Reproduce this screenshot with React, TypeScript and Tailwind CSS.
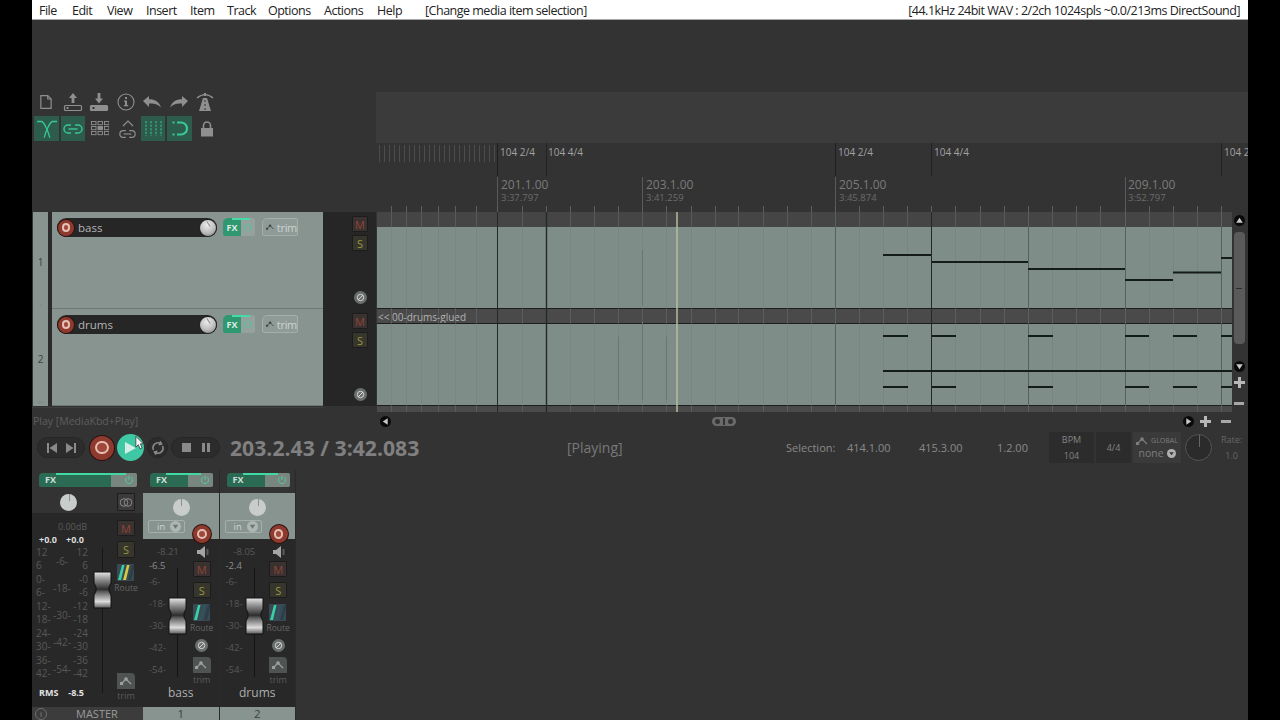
import React from "react";

const menuItems = [
  { label: "File", cls: "w-[33px]" },
  { label: "Edit", cls: "w-[35px]" },
  { label: "View", cls: "w-[39px]" },
  { label: "Insert", cls: "w-[44px]" },
  { label: "Item", cls: "w-[37px]" },
  { label: "Track", cls: "w-[41px]" },
  { label: "Options", cls: "w-[56px]" },
  { label: "Actions", cls: "w-[53px]" },
  { label: "Help", cls: "w-[48px]" },
];

const ICON = "#8f8f8f";
const GREEN = "#38c795";

// arrange canvas coordinates are page x/y minus (377, 212)
const softLines = [391, 406, 421, 438, 455, 476, 522, 570, 594, 618, 642, 666, 691, 715, 738, 763, 787, 811, 859, 883, 907, 955, 980, 1004, 1052, 1076, 1100, 1149, 1173, 1197];
const hardLines = [497, 546, 835, 931, 1028, 1125, 1221];
const bassNotes = [
  [883, 931, 255],
  [932, 1028, 262],
  [1028, 1125, 269],
  [1125, 1173, 280],
  [1173, 1221, 272.5],
  [1221, 1232, 258],
];
const hitStarts = [
  [883, 908],
  [932, 956],
  [1028, 1053],
  [1125, 1149],
  [1173, 1197],
  [1221, 1232],
];

const tempoLabels = [
  { text: "104 2/4", cls: "left-[124px]" },
  { text: "104 4/4", cls: "left-[172px]" },
  { text: "104 2/4", cls: "left-[462px]" },
  { text: "104 4/4", cls: "left-[558px]" },
  { text: "104 2", cls: "left-[848px]" },
];
const rulerLabels = [
  { bar: "201.1.00", time: "3:37.797", cls: "left-[125px]" },
  { bar: "203.1.00", time: "3:41.259", cls: "left-[270px]" },
  { bar: "205.1.00", time: "3:45.874", cls: "left-[463px]" },
  { bar: "209.1.00", time: "3:52.797", cls: "left-[752px]" },
];

function DocIcon() {
  return (
    <svg width="12" height="16" viewBox="0 0 14 17" fill="none" stroke={ICON} strokeWidth="1.4">
      <path d="M1 1h8l4 4v11H1z" />
      <path d="M9 1v4h4" />
    </svg>
  );
}
function DriveIcon({ up, solid }: { up?: boolean; solid?: boolean }) {
  return (
    <svg width="20" height="20" viewBox="0 0 20 20" fill="none">
      <rect x="1.5" y="13.5" width="17" height="5" rx="1" stroke={ICON} strokeWidth="1.2" fill={solid ? ICON : "none"} />
      <rect x="3.5" y="15" width="2" height="2" fill={solid ? "#333" : ICON} />
      {up ? <path d="M10 1l4 5h-2.6v5H8.6V6H6z" fill={ICON} /> : <path d="M10 11.5l4-5h-2.6V1H8.6v5.5H6z" fill={ICON} />}
    </svg>
  );
}
function InfoIcon() {
  return (
    <svg width="18" height="18" viewBox="0 0 18 18" fill="none">
      <circle cx="9" cy="9" r="8" stroke={ICON} strokeWidth="1.1" />
      <rect x="8" y="4" width="2" height="2" fill={ICON} />
      <path d="M7 7.5h3V12h1.2v1.2H6.8V12H8V8.7H7z" fill={ICON} />
    </svg>
  );
}
function UndoIcon({ flip }: { flip?: boolean }) {
  return (
    <svg width="20" height="14" viewBox="0 0 20 14" className={flip ? "-scale-x-100" : ""}>
      <path d="M1 6l6-5v3.2c6 0 10 2.400 12 8.300-3-3.500-7-4.500-12-4V12z" fill={ICON} />
    </svg>
  );
}
function RoadIcon() {
  return (
    <svg width="20" height="20" viewBox="0 0 20 20" fill="none">
      <path d="M2 6c5-4.500 11-4.500 16 0" stroke={ICON} strokeWidth="1.4" />
      <path d="M8 6h4l4 13H4z" fill={ICON} />
      <path d="M10 8v2M10 12v2M10 16v2" stroke="#333" strokeWidth="1" />
      <rect x="9" y="1" width="2" height="3" fill={ICON} />
    </svg>
  );
}
function CrossIcon() {
  return (
    <svg width="20" height="18" viewBox="0 0 20 18" fill="none" stroke={GREEN} strokeWidth="1.3">
      <path d="M0 1.500h4c3 0 4 4 6 8 2 4 2 7 3 8" />
      <path d="M20 1.500h-4c-3 0-4 4-6 8-2 4-2 7-3 8" />
    </svg>
  );
}
function LinkIcon({ color = GREEN, width = 20 }: { color?: string; width?: number }) {
  return (
    <svg width={width} height="10" viewBox="0 0 20 10" fill="none" stroke={color} strokeWidth="1.4">
      <path d="M8 1H5a4 4 0 0 0 0 8h3" />
      <path d="M12 1h3a4 4 0 0 1 0 8h-3" />
      <path d="M5.500 5h9" />
    </svg>
  );
}
function GridIcon() {
  const cells = [0, 1, 2, 3, 4, 5, 6, 7, 8];
  return (
    <svg width="18" height="15" viewBox="0 0 18 15" fill="none">
      {cells.map((i) => (
        <rect
          key={i}
          x={0.5 + (i % 3) * 6.5}
          y={0.5 + Math.floor(i / 3) * 5}
          width="4.500"
          height="3.200"
          stroke={ICON}
          strokeWidth="0.9"
          fill={i === 4 ? ICON : "none"}
        />
      ))}
    </svg>
  );
}
function EnvLinkIcon() {
  return (
    <div className="flex flex-col items-center gap-[2px]">
      <svg width="12" height="8" viewBox="0 0 12 8" fill="none" stroke={ICON} strokeWidth="1.2">
        <path d="M1 7l5-5 5 5" />
      </svg>
      <LinkIcon color={ICON} width={17} />
    </div>
  );
}
function BarsIcon() {
  const xs = [1, 6, 11, 16];
  return (
    <svg width="17" height="15" viewBox="0 0 17 15" fill="none" stroke={GREEN} strokeWidth="1" strokeDasharray="2.200 1.400">
      {xs.map((x) => (
        <path key={x} d={`M${x} 0v15`} />
      ))}
    </svg>
  );
}
function MagnetIcon() {
  return (
    <svg width="16" height="15" viewBox="0 0 16 15" fill="none" stroke={GREEN} strokeWidth="2.200">
      <path d="M5 1.500h4a6 6 0 0 1 0 12H5" />
      <path d="M0.500 1.500h2M0.500 13.500h2" />
    </svg>
  );
}
function LockIcon() {
  return (
    <svg width="14" height="16" viewBox="0 0 14 16" fill="none">
      <path d="M3.500 7V4.500a3.500 3.500 0 0 1 7 0V7" stroke={ICON} strokeWidth="1.600" />
      <rect x="1" y="7" width="12" height="8.500" fill={ICON} />
    </svg>
  );
}
function PowerIcon({ color = GREEN }: { color?: string }) {
  return (
    <svg width="10" height="10" viewBox="0 0 10 10" fill="none" stroke={color} strokeWidth="1">
      <path d="M3 2.200a3.500 3.500 0 1 0 4 0" />
      <path d="M5 0.800v4" />
    </svg>
  );
}
function EnvIcon({ color = "#d0d6d4" }: { color?: string }) {
  return (
    <svg width="13" height="8" viewBox="0 0 13 8" fill="none" stroke={color} strokeWidth="1.200">
      <path d="M1.500 6.500L6 2l5 5" />
      <circle cx="1.500" cy="6.500" r="1.200" fill={color} />
      <circle cx="6" cy="2" r="1.200" fill={color} />
    </svg>
  );
}

function Knob({ cls }: { cls: string }) {
  return (
    <div className={`rounded-full border border-black/80 bg-[radial-gradient(circle_at_45%_30%,#ececec,#bdbdbd_55%,#777777)] ${cls}`}>
      <div className="absolute left-1/2 top-[1px] h-[6px] w-px -rotate-[35deg] bg-[#888]" />
    </div>
  );
}
function FlatKnob({ cls = "relative" }: { cls?: string }) {
  return (
    <div className={`h-[17px] w-[17px] rounded-full bg-[#c8cdcb] ${cls}`}>
      <div className="absolute left-1/2 top-0 h-[7px] w-px bg-[#8b8f8e]" />
    </div>
  );
}
function RecBtn({ cls }: { cls: string }) {
  return (
    <div className={`flex items-center justify-center rounded-full border border-black/70 bg-[#8f3a2f] ${cls}`}>
      <div className="h-[55%] w-[55%] rounded-full border-[2.5px] border-[#e5c0b5] bg-[#a1483c]" />
    </div>
  );
}
function PhaseBtn() {
  return (
    <div className="flex h-[13px] w-[13px] items-center justify-center rounded-full bg-[#6a6f6d]">
      <svg width="9" height="9" viewBox="0 0 9 9" fill="none" stroke="#d5d8d6" strokeWidth="1">
        <circle cx="4.500" cy="4.500" r="3.200" />
        <path d="M2 7l5-5" />
      </svg>
    </div>
  );
}
function MuteSolo({ letter, cls = "h-[16px] w-[16px]" }: { letter: "M" | "S"; cls?: string }) {
  const tone = letter === "M" ? "bg-[#3a3230] text-[#8f4438]" : "bg-[#36362c] text-[#99953f]";
  return (
    <div className={`flex items-center justify-center rounded-[1px] border border-[#1c1c1c] text-[11px] leading-none ${tone} ${cls}`}>
      {letter}
    </div>
  );
}
function ScrollDot({ dir }: { dir: "up" | "down" | "left" | "right" }) {
  const pts = { up: "5,2.500 8,7 2,7", down: "5,7.500 8,3 2,3", left: "2.500,5 7,2 7,8", right: "7.500,5 3,2 3,8" }[dir];
  return (
    <svg width="11" height="11" viewBox="0 0 10 10" className="shrink-0">
      <circle cx="5" cy="5" r="5" fill="#0a0a0a" />
      <polygon points={pts} fill="#c8c8c8" />
    </svg>
  );
}
function Plus() {
  return (
    <svg width="11" height="11" viewBox="0 0 11 11" className="shrink-0">
      <path d="M4 0h3v4h4v3H7v4H4V7H0V4h4z" fill="#b8b8b8" />
    </svg>
  );
}
function Minus() {
  return <div className="h-[3px] w-[10px] shrink-0 bg-[#a8a8a8]" />;
}

function TrackFx() {
  return (
    <div className="relative flex h-[18px] w-[32px] overflow-hidden rounded-[2px] rounded-tl-[5px] bg-[#94a19d]">
      <div className="flex w-[18px] items-center justify-center bg-[#2f9871] text-[9px] font-bold leading-none text-[#dfece7]">FX</div>
      <div className="flex flex-1 items-center justify-center">
        <PowerIcon color="#55c99d" />
      </div>
      <div className="absolute left-[9px] top-0 h-[2px] w-[18px] bg-[#46dba6]" />
    </div>
  );
}
function TrackTrim() {
  return (
    <div className="flex h-[18px] w-[36px] items-center gap-[2px] rounded-[2px] rounded-tl-[5px] border border-[#a5aeab] bg-[#8f9b97] pl-[3px]">
      <EnvIcon color="#3a3f3e" />
      <span className="text-[11px] leading-none tracking-[-0.3px] text-[#cdd3d1]">trim</span>
    </div>
  );
}
function TrackRow({ num, name, folder }: { num: number; name: string; folder?: boolean }) {
  return (
    <div className="flex h-[97px] w-full pl-px">
      <div className="flex w-[15px] flex-col items-center justify-between bg-[#87948f] pb-[1px] pt-[45px] text-[10px] leading-none text-[#3a4240]">
        {num}
        <span className="text-[6px] text-[#77827e]">{folder ? "▭" : "▫"}</span>
      </div>
      <div className="w-[4px] bg-[#2b2b2b]" />
      <div className="flex w-[271px] gap-[5px] border-b border-[#6c7774] bg-[#87948f] pl-[5px] pt-[6px]">
        <div className="relative flex h-[19px] w-[160px] items-center rounded-full bg-[#262626] pl-[21px] text-[11.500px] leading-none text-[#b4b4b4]">
          {name}
          <RecBtn cls="absolute left-0 top-[0.5px] h-[18px] w-[18px]" />
          <Knob cls="absolute right-0 top-[0.5px] h-[18px] w-[18px]" />
        </div>
        <div className="ml-[1px]">
          <TrackFx />
        </div>
        <div className="ml-[2px]">
          <TrackTrim />
        </div>
      </div>
      <div className="flex flex-1 flex-col bg-[#262626] pl-[29px] pr-[7px] pt-[4px]">
        <div className="flex flex-col gap-[3px]">
          <MuteSolo letter="M" />
          <MuteSolo letter="S" />
        </div>
        <div className="ml-[1.5px] mt-[40px]">
          <PhaseBtn />
        </div>
      </div>
    </div>
  );
}

function ArrangeLines() {
  return (
    <svg className="pointer-events-none absolute inset-0" width="855" height="200" viewBox="377 212 855 200" fill="none">
      {softLines.map((x) => (
        <path key={x} d={`M${x + 0.5} 212V412`} stroke="#6f7c79" strokeOpacity="0.4" />
      ))}
      {hardLines.map((x, i) => (
        <path key={x} d={`M${x + 0.5} 212V412`} stroke={i < 2 || i === 3 ? "#23292a" : "#566260"} strokeWidth={x === 546 ? 1.4 : 1} />
      ))}
      <path d="M618.500 337v63M642.500 322v78M666.500 337v63M642.500 250v55" stroke="#687572" />
      {bassNotes.map(([a, b, y]) => (
        <path key={a} d={`M${a} ${y}H${b}`} stroke="#141c1b" strokeWidth="2" />
      ))}
      {hitStarts.map(([a, b]) => (
        <path key={a} d={`M${a} 336H${b}M${a} 387H${b}`} stroke="#141c1b" strokeWidth="2" />
      ))}
      <path d="M883 371H1232" stroke="#141c1b" strokeWidth="2" />
      <path d="M677 212V412" stroke="#b7bd9f" strokeWidth="1.500" />
    </svg>
  );
}

function Timeline() {
  const tempoTicks = Array.from({ length: 24 }, (_, i) => 379 + i * 5);
  const rulerTicks = [...softLines, ...hardLines];
  return (
    <div className="flex w-[872px] flex-col">
      <div className="h-[72px]" />
      <div className="h-[51px] bg-[#3b3b3b]" />
      <div className="relative h-[69px] overflow-hidden text-[#a2a2a2]">
        <svg className="absolute inset-0" width="872" height="69" viewBox="376 143 872 69" fill="none">
          {tempoTicks.map((x) => (
            <path key={x} d={`M${x + 0.5} 145v17`} stroke="#4c4c4c" />
          ))}
          {[497, 546, 835, 931, 1221].map((x) => (
            <path key={x} d={`M${x + 0.5} 143v33`} stroke={x === 497 || x === 835 ? "#1f1f1f" : "#222"} />
          ))}
          {[497, 642, 835, 1125].map((x) => (
            <path key={x} d={`M${x + 0.5} 177v35`} stroke="#5a5a5a" />
          ))}
          {rulerTicks.map((x) => (
            <path key={x} d={`M${x + 0.5} 206v6`} stroke="#5f5f5f" />
          ))}
        </svg>
        {tempoLabels.map((l) => (
          <span key={l.cls} className={`absolute top-[3px] whitespace-nowrap text-[10px] leading-[13px] ${l.cls}`}>
            {l.text}
          </span>
        ))}
        {rulerLabels.map((l) => (
          <div key={l.cls} className={`absolute top-[35px] text-[#7b7b7b] ${l.cls}`}>
            <div className="text-[12px] leading-[14px]">{l.bar}</div>
            <div className="text-[9.500px] leading-[12px] text-[#6c6c6c]">{l.time}</div>
          </div>
        ))}
      </div>
      <div className="flex h-[200px]">
        <div className="relative ml-px flex w-[855px] flex-col bg-[#454545]">
          <div className="h-[15px] bg-[#454545]" />
          <div className="h-[81px] bg-[#7f8d89]" />
          <div className="h-px bg-[#1d1d1d]" />
          <div className="h-[14px] bg-[#4a4a4a] pl-[1px] pt-[1px] text-[10px] leading-[14px] text-[#b3b3b3]">&lt;&lt; 00-drums-glued</div>
          <div className="h-px bg-[#1d1d1d]" />
          <div className="h-[81px] bg-[#7f8d89]" />
          <div className="h-px bg-[#1d1d1d]" />
          <div className="flex-1 bg-[#4a4a4a]" />
          <ArrangeLines />
        </div>
        <div className="flex w-[16px] flex-col items-center pr-[2px]">
          <div className="mt-[3px]">
            <ScrollDot dir="up" />
          </div>
          <div className="mt-[6px] flex h-[112px] w-[11px] items-center justify-center rounded-[4px] bg-[#5a5a5a]">
            <div className="h-px w-[6px] bg-[#2c2c2c]" />
          </div>
          <div className="mt-[17px]">
            <ScrollDot dir="down" />
          </div>
          <div className="mt-[5px]">
            <Plus />
          </div>
          <div className="mt-[14px]">
            <Minus />
          </div>
        </div>
      </div>
    </div>
  );
}

function Fader() {
  return (
    <svg width="19" height="38" viewBox="0 0 19 38">
      <defs>
        <linearGradient id="fdr" x1="0" y1="0" x2="0" y2="1">
          <stop offset="0" stopColor="#e8e8e8" />
          <stop offset="0.22" stopColor="#8c8c8c" />
          <stop offset="0.48" stopColor="#2e2e2e" />
          <stop offset="0.55" stopColor="#5d5d5d" />
          <stop offset="0.82" stopColor="#dcdcdc" />
          <stop offset="1" stopColor="#5a5a5a" />
        </linearGradient>
      </defs>
      <path d="M1 1h17v11l-2 4v4l2 4v13H1V24l2-4v-4L1 12z" fill="url(#fdr)" stroke="#101010" />
    </svg>
  );
}
function RouteIcon({ master }: { master?: boolean }) {
  return (
    <svg width="17" height="17" viewBox="0 0 17 17">
      <rect width="17" height="17" rx="1" fill="#3a4a55" />
      <path d="M1 16L5 1h2.500L4 16z" fill="#3ad0a5" />
      <path d="M6 16L10 1h2.500L9 16z" fill={master ? "#d8c93f" : "#33525c"} />
      <path d="M11 16L15 1h2v3l-3 12z" fill="#2c3f49" />
    </svg>
  );
}
function TrimTile({ cls = "h-[16px] w-[18px]" }: { cls?: string }) {
  return (
    <div className={`flex items-center justify-center rounded-tr-[4px] bg-[#4f5352] ${cls}`}>
      <EnvIcon color="#9da2a0" />
    </div>
  );
}
function Speaker() {
  return (
    <svg width="12" height="12" viewBox="0 0 12 12">
      <path d="M0 4h3l5-4v12L3 8H0z" fill="#a5a5a5" />
      <rect x="9.500" y="3" width="2" height="6" fill="#5a5a5a" />
    </svg>
  );
}
function MixerFx({ cls, side, bar }: { cls: string; side: string; bar: string }) {
  return (
    <div className={`relative flex h-[14px] overflow-hidden rounded-[2px] rounded-tl-[4px] bg-[#2b6b54] ${cls}`}>
      <span className="pl-[6px] text-[9px] font-bold leading-[14px] text-[#cfe0da]">FX</span>
      <div className={`ml-auto flex items-center justify-end bg-[#79857f] pr-[3px] ${side}`}>
        <PowerIcon color="#4fcda0" />
      </div>
      <div className={`absolute top-0 h-[2px] bg-[#42d8a4] ${bar}`} />
    </div>
  );
}

const masterLeft = ["12", "6", "0-", "6-", "12-", "18-", "24-", "30-", "36-", "42-"];
const masterRight = ["12", "6", "-0", "-6", "-12", "-18", "-24", "-30", "-36", "-42"];
const masterMid = ["-6-", "-18-", "-30-", "-42-", "-54-"];
const stripScale = ["-6-", "-18-", "-30-", "-42-", "-54-"];

function MasterStrip() {
  return (
    <div className="flex h-[250px] w-[111px] flex-col">
      <div className="flex h-[23px] items-start pl-[7px] pt-[3px]">
        <MixerFx cls="w-[98px]" side="w-[26px]" bar="left-[17px] w-[70px]" />
      </div>
      <div className="flex h-[20px] items-start bg-[#333]">
        <FlatKnob cls="relative ml-[28px] mt-[1px]" />
        <div className="ml-[40px] flex h-[18px] w-[18px] items-center justify-center rounded-[1px] border border-[#1c1c1c] bg-[#3b3b3b]">
          <svg width="14" height="9" viewBox="0 0 14 9" fill="none" stroke="#8a8a8a" strokeWidth="1">
            <circle cx="5" cy="4.500" r="3.800" />
            <circle cx="9" cy="4.500" r="3.800" />
          </svg>
        </div>
      </div>
      <div className="flex h-[194px] bg-[#282828]">
        <div className="relative w-[81px]">
          <div className="pt-[8px] text-center text-[9px] leading-[11px] text-[#5b5b5b]">0.00dB</div>
          <div className="flex pt-[2px] text-[9px] font-bold leading-[11px] text-[#dcdcdc]">
            <span className="w-[25px] text-right">+0.0</span>
            <span className="w-[27px] text-right">+0.0</span>
          </div>
          <div className="flex pt-[1px] text-[10px] leading-[13.450px] text-[#585858]">
            <div className="w-[20px] pl-[4px]">
              {masterLeft.map((t, i) => (
                <div key={i}>{t}</div>
              ))}
            </div>
            <div className="w-[20px] whitespace-nowrap pt-[9px] text-center">
              {masterMid.map((t) => (
                <div key={t} className="h-[27px]">
                  {t}
                </div>
              ))}
            </div>
            <div className="w-[16px] text-right">
              {masterRight.map((t, i) => (
                <div key={i}>{t}</div>
              ))}
            </div>
          </div>
          <div className="absolute bottom-[9px] left-0 flex text-[9px] font-bold leading-[11px] text-[#e2e2e2]">
            <span className="w-[27px] pl-[7px]">RMS</span>
            <span className="w-[25px] text-right">-8.5</span>
          </div>
          <div className="absolute left-[70px] top-[35px] h-[145px] w-px bg-[#161616]" />
          <div className="absolute left-[61px] top-[58px]">
            <Fader />
          </div>
        </div>
        <div className="flex w-[30px] flex-col items-start pl-[4px] pt-[7px]">
          <MuteSolo letter="M" cls="h-[16px] w-[18px]" />
          <div className="mt-[5px]">
            <MuteSolo letter="S" cls="h-[17px] w-[18px]" />
          </div>
          <div className="mt-[6px]">
            <RouteIcon master />
          </div>
          <div className="-ml-[6px] w-[30px] pt-[1px] text-center text-[8.500px] leading-[11px] text-[#666]">Route</div>
          <div className="mt-[80px]">
            <TrimTile />
          </div>
          <div className="w-[18px] pt-[1px] text-center text-[9px] leading-[11px] text-[#5b5b5b]">trim</div>
        </div>
      </div>
      <div className="flex h-[13px] items-center bg-[#3c3c3c]">
        <div className="ml-[3px] flex h-[12px] w-[12px] items-center justify-center rounded-full border border-[#6d6d6d] text-[8px] leading-none text-[#8a8a8a]">i</div>
        <span className="ml-[29px] text-[11px] leading-none text-[#9a9a9a]">MASTER</span>
      </div>
    </div>
  );
}

function TrackStrip({ name, num, db, peak }: { name: string; num: number; db: string; peak: string }) {
  return (
    <div className="flex h-[250px] w-[76.500px] flex-col border-r border-[#2a2a2a]">
      <div className="flex h-[23px] items-start pl-[7px] pt-[3px]">
        <MixerFx cls="w-[63px]" side="w-[25px]" bar="left-[16px] w-[35px]" />
      </div>
      <div className="relative h-[46px] bg-[#87948f]">
        <FlatKnob cls="absolute left-[29.500px] top-[6px]" />
        <div className="absolute left-[5px] top-[27px] flex h-[13px] w-[37px] items-center gap-[5px] rounded-[2px] border border-[#a5afab] pl-[8px] text-[9.500px] leading-none text-[#cdd3d1]">
          in
          <svg width="11" height="11" viewBox="0 0 10 10">
            <circle cx="5" cy="5" r="5" fill="#aeb6b3" />
            <polygon points="2.500,3.500 7.500,3.500 5,7" fill="#6b7673" />
          </svg>
        </div>
        <RecBtn cls="absolute left-[49px] top-[31px] h-[20px] w-[20px]" />
      </div>
      <div className="flex h-[168px] flex-col bg-[#282828]">
        <div className="flex h-[146px]">
          <div className="relative w-[50px] text-[#585858]">
            <div className="pt-[7px] text-center text-[9.500px] leading-[11px]">{db}</div>
            <div className="pl-[6px] pt-[3px] text-[9.500px] leading-[11px] text-[#8c8c8c]">{peak}</div>
            <div className="pl-[6px] text-[9.500px] leading-[22px]">
              {stripScale.map((t) => (
                <div key={t}>{t}</div>
              ))}
            </div>
            <div className="absolute left-[34px] top-[29px] h-[109px] w-px bg-[#141414]" />
            <div className="absolute left-[25px] top-[58px]">
              <Fader />
            </div>
          </div>
          <div className="flex w-[26px] flex-col items-start">
            <div className="ml-[4px] h-[23px] pt-[7px]">
              <Speaker />
            </div>
            <MuteSolo letter="M" cls="h-[16px] w-[18px]" />
            <div className="mt-[5px]">
              <MuteSolo letter="S" cls="h-[16px] w-[18px]" />
            </div>
            <div className="mt-[6px]">
              <RouteIcon />
            </div>
            <div className="-ml-[4px] w-[26px] pt-[1px] text-center text-[8.500px] leading-[11px] text-[#666]">Route</div>
            <div className="ml-[2.500px] mt-[6px]">
              <PhaseBtn />
            </div>
            <div className="mt-[5px]">
              <TrimTile />
            </div>
            <div className="w-[18px] pt-[1px] text-center text-[9px] leading-[11px] text-[#5b5b5b]">trim</div>
          </div>
        </div>
        <div className="text-center text-[12px] leading-[16px] text-[#aeaeae]">{name}</div>
      </div>
      <div className="flex h-[13px] items-center justify-center bg-[#87948f] text-[11.500px] leading-none text-[#3a4240]">{num}</div>
    </div>
  );
}

export default function App() {
  return (
    <div className="flex h-[720px] w-[1280px] justify-center overflow-hidden bg-black font-['Open_Sans',sans-serif]">
      <div className="flex w-[1216px] flex-col bg-[#333333]">
        <div className="flex h-[20px] items-center justify-between border-b border-[#a8a8a8] bg-white pl-[7px] pr-[8px] pt-[3px] text-[12.500px] leading-none tracking-[-0.5px] text-[#222]">
          <div className="flex items-center">
            {menuItems.map((m) => (
              <span key={m.label} className={m.cls}>
                {m.label}
              </span>
            ))}
            <span>[Change media item selection]</span>
          </div>
          <span>[44.1kHz 24bit WAV : 2/2ch 1024spls ~0.0/213ms DirectSound]</span>
        </div>

        <div className="flex h-[392px]">
          <div className="flex w-[344px] flex-col">
            <div className="h-[70px]" />
            <div className="flex h-[122px] flex-col pl-[1px]">
              <div className="flex h-[24px] items-center pb-[1px]">
                <div className="flex w-[26.500px] justify-center"><DocIcon /></div>
                <div className="flex w-[26.500px] justify-center"><DriveIcon up /></div>
                <div className="flex w-[26.500px] justify-center"><DriveIcon solid /></div>
                <div className="flex w-[26.500px] justify-center"><InfoIcon /></div>
                <div className="flex w-[26.500px] justify-center"><UndoIcon /></div>
                <div className="flex w-[26.500px] justify-center"><UndoIcon flip /></div>
                <div className="flex w-[26.500px] justify-center"><RoadIcon /></div>
              </div>
              <div className="mt-[2px] flex h-[25px] items-center">
                <div className="ml-[1px] flex h-[25px] w-[25px] items-center justify-center bg-[#2e5c4c]"><CrossIcon /></div>
                <div className="ml-[2px] flex h-[25px] w-[24px] items-center justify-center bg-[#2e5c4c]"><LinkIcon /></div>
                <div className="flex w-[30px] justify-center"><GridIcon /></div>
                <div className="flex w-[25px] justify-center"><EnvLinkIcon /></div>
                <div className="ml-[1px] flex h-[25px] w-[24px] items-center justify-center bg-[#2e5c4c]"><BarsIcon /></div>
                <div className="ml-[2px] flex h-[25px] w-[25px] items-center justify-center bg-[#2e5c4c]"><MagnetIcon /></div>
                <div className="ml-[8px]"><LockIcon /></div>
              </div>
            </div>
            <div className="flex flex-col">
              <TrackRow num={1} name="bass" />
              <TrackRow num={2} name="drums" folder />
            </div>
            <div className="mt-px h-px w-[291px] bg-[#3d3d3d]" />
          </div>
          <Timeline />
        </div>

        <div className="flex h-[18px] items-center">
          <div className="w-[344px] pl-px pt-px text-[10.500px] leading-none text-[#5e5e5e]">Play [MediaKbd+Play]</div>
          <div className="flex w-[856px] items-center pl-[4px]">
            <ScrollDot dir="left" />
            <div className="ml-[321px] flex h-[9px] w-[24px] items-center justify-around rounded-full bg-[#6a6a6a] px-[2px]">
              <span className="h-[5px] w-[5px] rounded-full bg-[#333]" />
              <span className="h-[7px] w-[2px] bg-[#333]" />
              <span className="h-[5px] w-[5px] rounded-full bg-[#333]" />
            </div>
            <div className="ml-[447px]">
              <ScrollDot dir="right" />
            </div>
            <div className="ml-[6px]">
              <Plus />
            </div>
            <div className="ml-[10px]">
              <Minus />
            </div>
          </div>
        </div>

        <div className="flex h-[36px] items-center pb-px pl-[5px]">
          <div className="flex h-[21px] w-[48px] items-center justify-around rounded-full border border-[#262626] bg-[#2c2c2c] px-[4px]">
            <svg width="10" height="10" viewBox="0 0 10 10"><path d="M0 0h2v10H0zM10 0v10L2.500 5z" fill="#8a8a8a" /></svg>
            <svg width="10" height="10" viewBox="0 0 10 10"><path d="M10 0H8v10h2zM0 0v10l7.500-5z" fill="#8a8a8a" /></svg>
          </div>
          <RecBtn cls="ml-[4px] h-[26px] w-[26px]" />
          <div className="relative ml-[2px] flex h-[27px] w-[27px] items-center justify-center rounded-full bg-[#3fc8a4]">
            <svg width="11" height="12" viewBox="0 0 11 12"><path d="M0 0l11 6-11 6z" fill="#d5efe7" /></svg>
            <svg className="absolute left-[18px] top-[1px]" width="10" height="16" viewBox="0 0 12 18">
              <path d="M1 1v13l3-3 2 5 2.500-1-2-5H10z" fill="#f5f5f5" stroke="#222" strokeWidth="0.800" />
            </svg>
          </div>
          <div className="ml-[3px] flex h-[21px] w-[21px] items-center justify-center rounded-full border border-[#262626] bg-[#2c2c2c]">
            <svg width="14" height="14" viewBox="0 0 14 14" fill="none" stroke="#8a8a8a" strokeWidth="1.600">
              <path d="M2.500 9a5 5 0 0 1 7-6.500M11.500 5a5 5 0 0 1-7 6.500" />
              <path d="M9 0.500l1.500 2.500-2.800.8M5 13.500l-1.500-2.500 2.800-.8" />
            </svg>
          </div>
          <div className="ml-[3px] flex h-[21px] w-[49px] items-center justify-around rounded-full border border-[#262626] bg-[#2c2c2c] px-[4px]">
            <div className="h-[9px] w-[9px] bg-[#8a8a8a]" />
            <div className="flex gap-[2px]">
              <div className="h-[9px] w-[3px] bg-[#8a8a8a]" />
              <div className="h-[9px] w-[3px] bg-[#8a8a8a]" />
            </div>
          </div>
          <span className="ml-[10px] w-[337px] text-[21.200px] font-bold leading-none text-[#808080]">203.2.43 / 3:42.083</span>
          <span className="w-[219px] text-[14px] leading-none text-[#787878]">[Playing]</span>
          <span className="w-[61px] text-[11px] leading-none text-[#8a8a8a]">Selection:</span>
          <span className="w-[72px] text-[11px] leading-none text-[#8a8a8a]">414.1.00</span>
          <span className="w-[78px] text-[11px] leading-none text-[#8a8a8a]">415.3.00</span>
          <span className="w-[52px] text-[11px] leading-none text-[#8a8a8a]">1.2.00</span>
          <div className="flex h-[31px] w-[45px] flex-col items-center justify-center gap-[7px] bg-[#2c2c2c] text-[9px] leading-none text-[#848484]">
            <span>BPM</span>
            <span>104</span>
          </div>
          <div className="ml-[2px] flex h-[31px] w-[35px] items-center justify-center bg-[#2c2c2c] text-[9px] leading-none text-[#848484]">4/4</div>
          <div className="ml-[2px] flex h-[31px] w-[48px] flex-col items-center justify-center gap-[3px] bg-[#3a3a3a] text-[#7e7e7e]">
            <div className="flex items-center gap-[2px] text-[7px] leading-none">
              <EnvIcon color="#7e7e7e" />
              GLOBAL
            </div>
            <div className="flex items-center gap-[3px] text-[10.500px] leading-none">
              none
              <svg width="9" height="9" viewBox="0 0 10 10">
                <circle cx="5" cy="5" r="5" fill="#b0b0b0" />
                <polygon points="2.500,3.500 7.500,3.500 5,7" fill="#333" />
              </svg>
            </div>
          </div>
          <div className="relative ml-[4px] h-[27px] w-[27px] rounded-full border border-[#555] bg-[#2b2b2b]">
            <div className="absolute left-1/2 top-0 h-[12px] w-px bg-[#666]" />
          </div>
          <div className="ml-[9px] flex flex-col items-center gap-[7px] text-[9px] leading-none text-[#666]">
            <span>Rate:</span>
            <span>1.0</span>
          </div>
        </div>

        <div className="mt-[4px] flex">
          <MasterStrip />
          <TrackStrip name="bass" num={1} db="-8.21" peak="-6.5" />
          <TrackStrip name="drums" num={2} db="-8.05" peak="-2.4" />
        </div>
      </div>
    </div>
  );
}
